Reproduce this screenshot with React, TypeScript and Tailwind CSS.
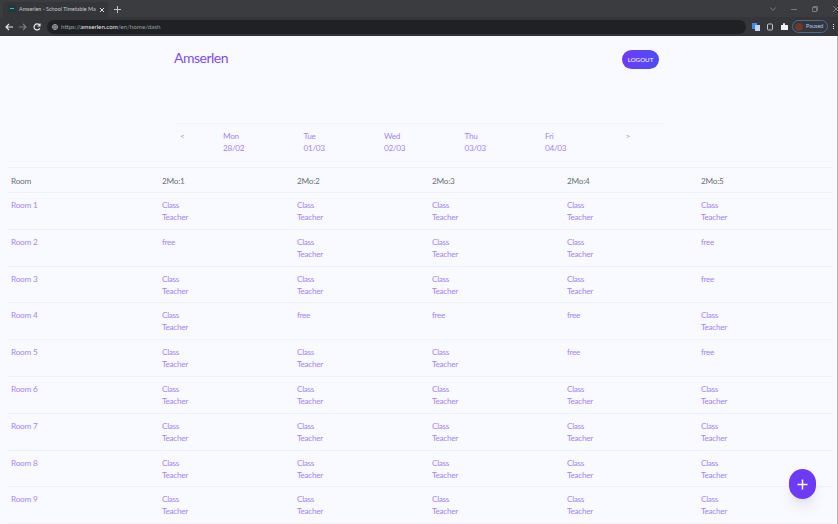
import React from "react";

const C = "c";
const F = "f";
const rows: string[][] = [
  [C, C, C, C, C],
  [F, C, C, C, F],
  [C, C, C, C, F],
  [C, F, F, F, C],
  [C, C, C, F, F],
  [C, C, C, C, C],
  [C, C, C, C, C],
  [C, C, C, C, C],
  [C, C, C, C, C],
];
const days = [
  ["Mon", "28/02"],
  ["Tue", "01/03"],
  ["Wed", "02/03"],
  ["Thu", "03/03"],
  ["Fri", "04/03"],
];
const cols = ["w-[135px]", "w-[135px]", "w-[135px]", "w-[134px]", "w-[130px]"];

function Chrome() {
  return (
    <div className="h-[36px] shrink-0 bg-[#35363a] text-[#dadce0] flex flex-col">
      <div className="h-[17px] flex items-end bg-[#3b3c40] pl-[3px]">
        <div className="w-[105px] h-[15px] bg-[#35363a] rounded-t-[3px] flex items-center pl-[5px] pr-[3px] gap-[3px]">
          <svg width="8" height="9" viewBox="0 0 8 9">
            <rect x="0" y="0" width="8" height="7" rx="1" fill="#1f3a3a" />
            <path d="M2 7v2l2-2z" fill="#1f3a3a" />
            <rect x="2" y="3" width="4" height="1" fill="#4fb0a0" />
          </svg>
          <span className="flex-1 whitespace-nowrap text-[5.400px] text-[#c8cacd]">Amserlen - School Timetable Ma</span>
          <svg width="6" height="6" viewBox="0 0 6 6" stroke="#dadce0" strokeWidth="1">
            <path d="M1 1l4 4M5 1l-4 4" />
          </svg>
        </div>
        <svg className="ml-[6px] mb-[4px]" width="7" height="7" viewBox="0 0 7 7" stroke="#c4c6c9" strokeWidth="1">
          <path d="M3.500 0v7M0 3.500h7" />
        </svg>
        <div className="flex-1" />
        <div className="flex items-center gap-[15px] mb-[5px] mr-[-1px] text-[#77797c]">
          <svg width="6" height="4" viewBox="0 0 6 4" fill="none" stroke="currentColor"><path d="M.5 .5L3 3.500 5.500 .5" /></svg>
          <svg width="6" height="5" viewBox="0 0 6 5" stroke="currentColor"><path d="M0 2.500h6" /></svg>
          <svg width="6" height="6" viewBox="0 0 6 6" fill="none" stroke="currentColor"><path d="M.5 1.500h4v4h-4zM1.500 1.500v-1h4v4h-1" /></svg>
          <svg width="6" height="6" viewBox="0 0 6 6" stroke="currentColor"><path d="M0 0l6 6M6 0L0 6" /></svg>
        </div>
      </div>
      <div className="h-[19px] flex items-center pl-[5px] pr-[2px]">
        <svg width="8" height="8" viewBox="0 0 8 8" fill="none" stroke="#e8eaed" strokeWidth="1.100"><path d="M8 4H1M4 1L1 4l3 3" /></svg>
        <svg className="ml-[6px]" width="8" height="8" viewBox="0 0 8 8" fill="none" stroke="#7d8084" strokeWidth="1.100"><path d="M0 4h7M4 1l3 3-3 3" /></svg>
        <svg className="ml-[6px]" width="8" height="8" viewBox="0 0 8 8" fill="none" stroke="#e8eaed" strokeWidth="1.200"><path d="M6.800 5.200A3 3 0 1 1 6.500 2.200M7 .5V3H4.500" /></svg>
        <div className="ml-[6px] w-[699px] h-[14px] rounded-full bg-[#202124] flex items-center pl-[5px]">
          <svg width="6" height="6" viewBox="0 0 6 6" fill="none" stroke="#bdc1c6" strokeWidth=".8"><circle cx="3" cy="3" r="2.500" /><path d="M.5 3h5M3 .5v5" /></svg>
          <span className="ml-[3px] text-[6.200px] text-[#9aa0a6]">https://<span className="text-[#e8eaed]">amserlen.com</span>/en/home/dash</span>
        </div>
        <svg className="ml-[6px]" width="8" height="8" viewBox="0 0 8 8"><rect width="5" height="6" fill="#4285f4" /><rect x="3" y="2" width="5" height="6" fill="#c5d6f5" /></svg>
        <svg className="ml-[7px]" width="6" height="8" viewBox="0 0 6 8" fill="none" stroke="#c4c6c9"><rect x=".5" y="1" width="5" height="6" rx="1" /></svg>
        <svg className="ml-[8px]" width="7" height="7" viewBox="0 0 7 7" fill="#f1f3f4"><path d="M0 2h2V1a1 1 0 0 1 2 0v1h3v5H0z" /></svg>
        <div className="ml-[4px] w-[36px] h-[13px] rounded-full border border-[#4d6a94] flex items-center pl-[2px] gap-[3px]">
          <span className="w-[8px] h-[8px] rounded-full bg-[#6b3a2a]" />
          <span className="text-[5.500px] text-[#a8c7fa]">Paused</span>
        </div>
        <div className="ml-[5px] flex flex-col gap-[1px]">
          <span className="w-[1px] h-[1px] bg-[#e8eaed]" />
          <span className="w-[1px] h-[1px] bg-[#e8eaed]" />
          <span className="w-[1px] h-[1px] bg-[#e8eaed]" />
        </div>
      </div>
    </div>
  );
}

function Cell({ kind, width }: { kind: string; width: string }) {
  return (
    <div className={`${width} text-[8.200px] tracking-[-0.3px] leading-[12px] text-[#a385ff]`}>
      {kind === C ? (
        <>
          <div>Class</div>
          <div>Teacher</div>
        </>
      ) : (
        <div>free</div>
      )}
    </div>
  );
}

export default function App() {
  return (
    <div className="w-[838px] h-[524px] overflow-hidden flex flex-col bg-[#f9faff] font-['Lato',sans-serif]">
      <Chrome />
      <div className="flex-1 min-h-0 flex flex-col relative border-r border-[#b4b4b8]">
        <div className="h-[52px] shrink-0 flex items-start pl-[174px]">
          <div className="mt-[13px] w-[448px] text-[14px] tracking-[-0.5px] leading-[18px] text-[#7c4dff]">Amserlen</div>
          <button className="mt-[14px] w-[37px] h-[19px] rounded-full bg-gradient-to-r from-[#6d3bf5] to-[#4b4cf6] text-white text-[6.200px]">LOGOUT</button>
        </div>
        <div className="h-[79px] shrink-0 pl-[175px] pt-[35px]">
          <div className="w-[489px] border-t border-[#f1f1f7] pt-[6px] flex text-[8.200px] tracking-[-0.3px] leading-[12px] text-[#a385ff]">
            <div className="w-[48px] pl-[5px]">&lt;</div>
            {days.map(([d, n]) => (
              <div key={d} className="w-[80.500px]">
                <div>{d}</div>
                <div>{n}</div>
              </div>
            ))}
            <div>&gt;</div>
          </div>
        </div>
        <div className="ml-[8px] w-[824px]">
          <div className="h-[26px] border-t border-b border-[#f1f1f7] flex items-center pl-[3px] pt-[2px] text-[8.200px] tracking-[-0.2px] text-[#6b7078]">
            <div className="w-[151px]">Room</div>
            {["2Mo:1", "2Mo:2", "2Mo:3", "2Mo:4", "2Mo:5"].map((h, i) => (
              <div key={h} className={cols[i]}>{h}</div>
            ))}
          </div>
          {rows.map((r, i) => (
            <div key={i} className="h-[36.800px] border-b border-[#f1f1f7] flex pl-[3px] pt-[6px]">
              <div className="w-[151px] text-[8.200px] tracking-[-0.2px] leading-[12px] text-[#a385ff]">Room {i + 1}</div>
              {r.map((k, j) => (
                <Cell key={j} kind={k} width={cols[j]} />
              ))}
            </div>
          ))}
        </div>
        <button className="absolute left-[789px] top-[433px] w-[27px] h-[30px] rounded-full bg-[#6d3bf5] flex items-center justify-center shadow-lg">
          <svg width="11" height="11" viewBox="0 0 11 11" stroke="#fff" strokeWidth="1.500"><path d="M5.500 .5v10M.5 5.500h10" /></svg>
        </button>
      </div>
    </div>
  );
}
